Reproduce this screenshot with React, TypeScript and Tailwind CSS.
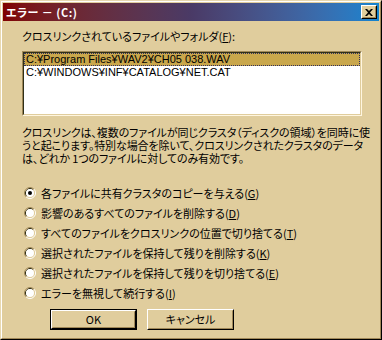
const jp = "font-['Noto_Sans_CJK_JP',sans-serif]";

function Radio({ checked }: { checked?: boolean }) {
  return (
    <svg width="12" height="12" viewBox="0 0 12 12" className="shrink-0">
      <path d="M2.11 9.89 A5.5 5.5 0 0 1 9.89 2.11" fill="none" stroke="#a08858" strokeWidth="1" />
      <path d="M9.89 2.11 A5.5 5.5 0 0 1 2.11 9.89" fill="none" stroke="#ffffff" strokeWidth="1" />
      <path d="M2.82 9.18 A4.5 4.5 0 0 1 9.18 2.82" fill="none" stroke="#303018" strokeWidth="1" />
      <path d="M9.18 2.82 A4.5 4.5 0 0 1 2.82 9.18" fill="none" stroke="#e0cd9d" strokeWidth="1" />
      <circle cx="6" cy="6" r="4" fill="#ffffff" />
      {checked && <circle cx="6" cy="6" r="2" fill="#000000" />}
    </svg>
  );
}

function Option({ text, k, checked }: { text: string; k: string; checked?: boolean }) {
  return (
    <div className="h-[20px] flex items-center gap-[5px] pl-[2px]">
      <Radio checked={checked} />
      <span className="leading-[13px]">
        {text}(<span className="underline">{k}</span>)
      </span>
    </div>
  );
}

function Button({ children, primary }: { children: React.ReactNode; primary?: boolean }) {
  return (
    <div className={primary ? "border border-black" : ""}>
      <div
        className={
          "border border-t-white border-l-white border-b-black border-r-black " +
          (primary ? "w-[85px] h-[19px]" : "w-[87px] h-[21px]")
        }
      >
        <div className="h-full border border-transparent border-b-[#a08858] border-r-[#a08858] flex items-center justify-center leading-[13px]">
          {children}
        </div>
      </div>
    </div>
  );
}

export default function App() {
  const options = [
    { text: "各ファイルに共有クラスタのコピーを与える", k: "G", checked: true },
    { text: "影響のあるすべてのファイルを削除する", k: "D" },
    { text: "すべてのファイルをクロスリンクの位置で切り捨てる", k: "T" },
    { text: "選択されたファイルを保持して残りを削除する", k: "K" },
    { text: "選択されたファイルを保持して残りを切り捨てる", k: "E" },
    { text: "エラーを無視して続行する", k: "I" },
  ];

  return (
    <div className={"w-[382px] h-[340px] bg-[#e0cd9d] text-black text-[11px] [font-feature-settings:'palt'] " + jp}>
      <div className="h-full border border-t-[#e8d8b0] border-l-[#e8d8b0] border-b-black border-r-black">
        <div className="h-full border border-t-white border-l-white border-b-[#a08858] border-r-[#a08858] p-px flex flex-col">
          {/* title bar */}
          <div className="h-[18px] bg-gradient-to-r from-[#800000] via-[#4a3a66] to-[#1084d0] flex items-center justify-between pl-[3px] pr-[2px]">
            <span className="text-white font-bold text-[11px] leading-none tracking-[0.5px]">エラー － (C:)</span>
            <div className="w-[16px] h-[14px] bg-[#e0cd9d] border border-t-white border-l-white border-b-black border-r-black">
              <div className="h-full border border-transparent border-b-[#a08858] border-r-[#a08858] flex items-center justify-center">
                <svg width="8" height="7" viewBox="0 0 8 7">
                  <path d="M0 0h2l2 2 2-2h2L5 3.5 8 7H6L4 5 2 7H0l3-3.5z" fill="#000" />
                </svg>
              </div>
            </div>
          </div>

          <div className="pl-[19px] pr-[17px] pt-[9px] flex flex-col">
            <div className="leading-[12px] h-[12px]">
              クロスリンクされているファイルやフォルダ(<span className="underline">F</span>):
            </div>

            {/* list box */}
            <div className="mt-[9px] w-[340px] h-[65px] border border-t-[#a08858] border-l-[#a08858] border-b-[#fff6e0] border-r-[#fff6e0]">
              <div className="h-full border border-t-[#303018] border-l-[#303018] border-b-[#e0cd9d] border-r-[#e0cd9d] bg-white font-['Liberation_Sans',sans-serif] text-[11px]">
                <div className="h-[13px] leading-[11px] bg-[#c9a74c] border border-dotted border-[#303060] pl-px">
                  C:¥Program Files¥WAV2¥CH05 038.WAV
                </div>
                <div className="h-[13px] leading-[13px] pl-[2px]">C:¥WINDOWS¥INF¥CATALOG¥NET.CAT</div>
              </div>
            </div>

            <div className="mt-[10px] leading-[13px] whitespace-nowrap tracking-[-0.1px]">
              <div className="h-[13px]">クロスリンクは、複数のファイルが同じクラスタ（ディスクの領域）を同時に使</div>
              <div className="h-[13px]">うと起こります。特別な場合を除いて、クロスリンクされたクラスタのデータ</div>
              <div className="h-[13px]">は、どれか 1つのファイルに対してのみ有効です。</div>
            </div>

            <div className="mt-[18px] flex flex-col">
              {options.map((o) => (
                <Option key={o.k} text={o.text} k={o.k} checked={o.checked} />
              ))}
            </div>

            <div className="mt-[6px] ml-[28px] flex gap-[10px]">
              <Button primary>OK</Button>
              <Button>キャンセル</Button>
            </div>
          </div>
        </div>
      </div>
    </div>
  );
}
